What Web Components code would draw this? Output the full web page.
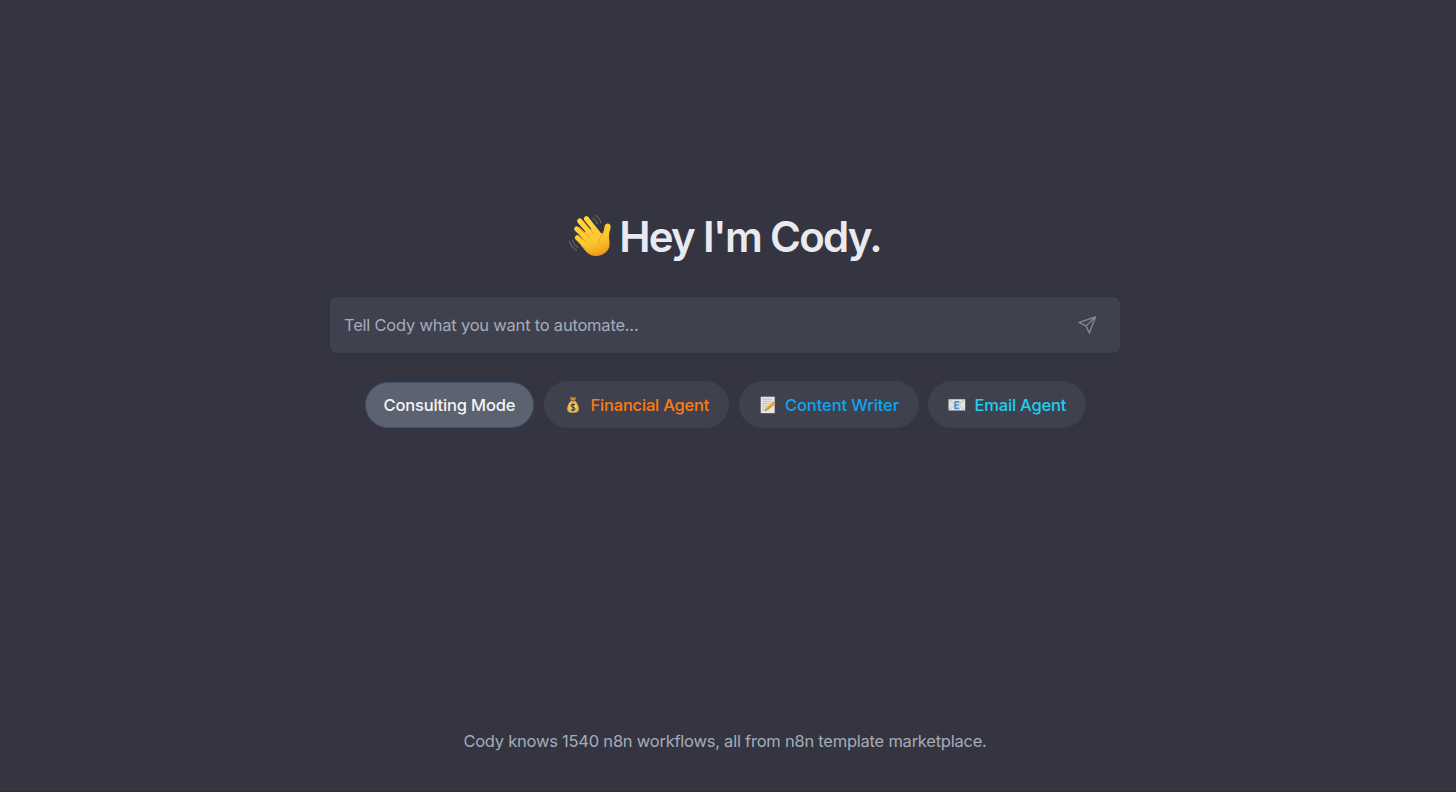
<!DOCTYPE html>
<html lang="en">
<head>
<meta charset="utf-8">
<title>Cody</title>
<style>
  body {
    margin: 0;
    background: #353541;
    font-family: Inter, "Liberation Sans", sans-serif;
  }
</style>
</head>
<body>
<cody-app>
  <cody-heading slot="main">Hey I'm Cody.</cody-heading>
  <prompt-box slot="main">Tell Cody what you want to automate...</prompt-box>
  <agent-list slot="main">
    <agent-pill active style="--w: 169.5px; --track: -0.18px">Consulting Mode</agent-pill>
    <agent-pill icon="money" style="--w: 185.5px; --color: #f97c14; --pad: 21.5px; --gap: 10.5px; --track: -0.2px">Financial Agent</agent-pill>
    <agent-pill icon="memo" style="--w: 180px; --color: #10a5e9; --pad: 20px; --gap: 9.5px; --track: -0.1px">Content Writer</agent-pill>
    <agent-pill icon="email" style="--w: 157.5px; --color: #22cdee; --pad: 18.5px; --track: -0.18px">Email Agent</agent-pill>
  </agent-list>
  <span slot="footer">Cody knows 1540 n8n workflows, all from n8n template marketplace.</span>
</cody-app>

<script>
class CodyApp extends HTMLElement {
  constructor() {
    super()
    this.attachShadow({ mode: "open" })
    this.shadowRoot.innerHTML = `
      <style>
        :host {
          display: flex;
          flex-direction: column;
          align-items: center;
          box-sizing: border-box;
          height: 100vh;
          padding: 210px 6px 0 0;
          border-bottom: 1px solid #2f2f3a;
          overflow: hidden;
        }

        main {
          display: flex;
          flex-direction: column;
          align-items: center;
          flex: 1;
        }

        footer {
          color: #a5acb9;
          font-size: 16.5px;
          line-height: 24px;
          letter-spacing: -0.235px;
          padding-bottom: 38px;
          white-space: nowrap;
        }
      </style>
      <main><slot name="main"></slot></main>
      <footer><slot name="footer"></slot></footer>
    `
  }
}

class CodyHeading extends HTMLElement {
  constructor() {
    super()
    this.attachShadow({ mode: "open" })
    this.shadowRoot.innerHTML = `
      <style>
        :host {
          display: block;
          height: 87px;
        }

        h1 {
          display: flex;
          align-items: center;
          gap: 7px;
          margin: 0;
          height: 50px;
          color: #e9eaef;
          font-size: 42px;
          font-weight: 600;
          letter-spacing: -1.7px;
          white-space: nowrap;
        }

        span {
          padding-top: 2px;
        }
      </style>
      <h1>
        <svg width="43" height="43" viewBox="26 27 129 129" fill="none" stroke-linecap="round" stroke-linejoin="round">
          <defs>
            <linearGradient id="skin" x1="60" y1="35" x2="110" y2="155" gradientUnits="userSpaceOnUse">
              <stop offset="0" stop-color="#ffd93f"/>
              <stop offset=".65" stop-color="#fdc62e"/>
              <stop offset="1" stop-color="#ec9c1b"/>
            </linearGradient>
          </defs>
          <g stroke="#666262" stroke-width="3.5">
            <path d="M104 31q14 7 18 23M97 39q11 6 14 18M27 108q4 18 21 28M36 106q4 13 16 21"/>
          </g>
          <g stroke="url(#skin)" stroke-width="15">
            <path d="M78 41l34 43"/>
            <path d="M58 48l42 49"/>
            <path d="M49 72l38 36"/>
            <path d="M51 98l24 24"/>
          </g>
          <path d="M70 82l37-15c6 7 11 14 15 17 4 3 7 1 8-4l3-17c2-11 18-10 18 1 0 11-6 19-5 31 1 15 5 30-5 42-13 15-34 20-51 12-12-6-19-17-27-27z" fill="url(#skin)"/>
          <path d="M66 46l33 39M57 67l31 31M59 94l19 18" stroke="#ef9f1c" stroke-width="3"/>
          <path d="M130 80q-1 9-8 15-7 7-6 17" stroke="#eeaa23" stroke-width="3"/>
          <path d="M68 124q17 29 42 24 22-4 31-18" stroke="#e89920" stroke-width="2"/>
        </svg>
        <span><slot></slot></span>
      </h1>
    `
  }
}

class PromptBox extends HTMLElement {
  constructor() {
    super()
    this.attachShadow({ mode: "open" })
    this.shadowRoot.innerHTML = `
      <style>
        :host {
          display: flex;
          align-items: center;
          justify-content: space-between;
          box-sizing: border-box;
          width: 790px;
          height: 56px;
          padding: 0 23px 0 14px;
          border-radius: 7px;
          background: #40414f;
          box-shadow: 0 0 2px rgba(45, 46, 60, 0.4);
          color: #a5acb9;
          font-size: 16.5px;
          letter-spacing: -0.22px;
          white-space: nowrap;
        }

        svg {
          display: block;
        }
      </style>
      <span><slot></slot></span>
      <svg width="19" height="19" viewBox="0 0 19 19" fill="none" stroke="#83848f" stroke-width="1.4" stroke-linecap="round" stroke-linejoin="round">
        <path d="M17.5 1L1 6.3l7 3.6 3.3 7.1zM8 9.9l9.5-8.9"/>
      </svg>
    `
  }
}

class AgentList extends HTMLElement {
  constructor() {
    super()
    this.attachShadow({ mode: "open" })
    this.shadowRoot.innerHTML = `
      <style>
        :host {
          display: flex;
          align-items: center;
          gap: 9.5px;
          height: 47px;
          margin-top: 28px;
        }
      </style>
      <slot></slot>
    `
  }
}

const icons = {
  money: `
    <svg width="14" height="18" viewBox="0 0 14 18">
      <path d="M4 1l2 .8L7 1l1 .8L10 1 9 4.7H5z" fill="#c69334"/>
      <path d="M4.7 5h4.6c2 2 3.6 5 3.5 8-.1 2.7-1.6 3.7-5.8 3.7S1.3 15.7 1.2 13C1.1 10 2.7 7 4.7 5z" fill="#e6b849"/>
      <path d="M5 4.9h4" stroke="#996a22" stroke-width="1"/>
      <ellipse cx="7" cy="11.3" rx="3.6" ry="4.2" fill="#f7d576"/>
      <path d="M9 9.3Q8.5 8.3 7 8.3 5 8.3 5 9.7q0 1.200 2 1.6t2 1.7q0 1.400-2 1.4-1.600 0-2.100-1.2M7 7.3v8" fill="none" stroke="#38352e" stroke-width="1.1"/>
    </svg>`,
  memo: `
    <svg width="16" height="18" viewBox="0 0 16 18">
      <path d="M.7.7h14v16.5H.7z" fill="#e5e5e2"/>
      <path d="M2.5 3.2h10.2M2.5 5.4h9M2.5 7.6h8M2.5 9.8h5M2.5 12h3M2.5 14.2h2" stroke="#aaaab0" stroke-width=".8" stroke-dasharray="2 .5"/>
      <path d="M5 14.8l1.1-3.3 6.3-5.3 2.2 2.5-6.3 5.2z" fill="#efb52b"/>
      <path d="M7.2 13.3l6.3-5.2" stroke="#c47f1f" stroke-width="1"/>
      <path d="M12.1 6.4l1.3-1 2.2 2.4-1.3 1.1z" fill="#e88182"/>
      <path d="M5 14.8l.6-1.7 1 1.1z" fill="#4c4741"/>
    </svg>`,
  email: `
    <svg width="18" height="12" viewBox="0 0 18 12">
      <rect x=".5" y=".3" width="16.7" height="11.3" rx=".5" fill="#e5e4e1"/>
      <path d="M1 .8l7.9 6 7.8-6M1 11l5.5-5M16.7 11l-5.5-5" fill="none" stroke="#b9b9bb" stroke-width=".9"/>
      <path d="M11.3 2.8H7.2v6.5h4.1M7.2 6h3.6" fill="none" stroke="#4b91d0" stroke-width="1.7"/>
    </svg>`
}

class AgentPill extends HTMLElement {
  constructor() {
    super()
    this.attachShadow({ mode: "open" })
    this.shadowRoot.innerHTML = `
      <style>
        :host {
          display: flex;
          align-items: center;
          gap: var(--gap, 9px);
          box-sizing: border-box;
          width: var(--w);
          height: 47px;
          padding-left: var(--pad, 18px);
          border: 1px solid #39434f;
          border-radius: 24px;
          background: #40414f;
          color: var(--color, #f3f4f6);
          font-size: 16.5px;
          font-weight: 500;
          letter-spacing: var(--track, 0);
          white-space: nowrap;
        }

        :host([active]) {
          height: 46px;
          background: #5d6271;
          border-color: #41516a;
        }

        svg {
          display: block;
          flex: none;
        }
      </style>
      ${icons[this.getAttribute("icon")] || ""}
      <span><slot></slot></span>
    `
  }
}

customElements.define("cody-app", CodyApp)
customElements.define("cody-heading", CodyHeading)
customElements.define("prompt-box", PromptBox)
customElements.define("agent-list", AgentList)
customElements.define("agent-pill", AgentPill)
</script>
</body>
</html>
